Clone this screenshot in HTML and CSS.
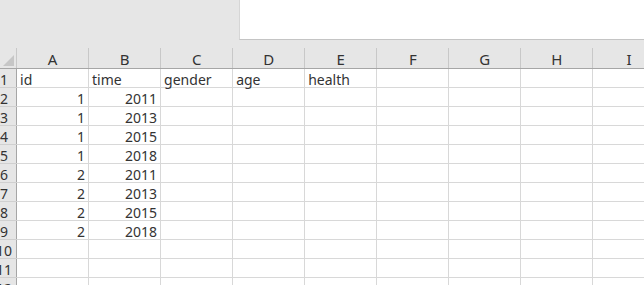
FILE: index.html
```html
<!DOCTYPE html>
<html lang="en">
<head>
    <meta charset="UTF-8">
    <title>Sheet</title>
    <link rel="stylesheet" href="styles.css">
</head>
<body>
    <div class="top">
        <div class="formula-box"></div>
    </div>
    <div class="sheet">
        <table class="grid">
            <tr class="head">
                <th class="corner"><div class="corner-inner"><span class="tri"></span></div></th>
                <th>A</th><th>B</th><th>C</th><th>D</th><th>E</th><th>F</th><th>G</th><th>H</th><th>I</th>
            </tr>
            <tr><th class="num">1</th><td>id</td><td>time</td><td>gender</td><td>age</td><td>health</td><td></td><td></td><td></td><td></td></tr>
            <tr><th class="num">2</th><td class="n">1</td><td class="n">2011</td><td></td><td></td><td></td><td></td><td></td><td></td><td></td></tr>
            <tr><th class="num">3</th><td class="n">1</td><td class="n">2013</td><td></td><td></td><td></td><td></td><td></td><td></td><td></td></tr>
            <tr><th class="num">4</th><td class="n">1</td><td class="n">2015</td><td></td><td></td><td></td><td></td><td></td><td></td><td></td></tr>
            <tr><th class="num">5</th><td class="n">1</td><td class="n">2018</td><td></td><td></td><td></td><td></td><td></td><td></td><td></td></tr>
            <tr><th class="num">6</th><td class="n">2</td><td class="n">2011</td><td></td><td></td><td></td><td></td><td></td><td></td><td></td></tr>
            <tr><th class="num">7</th><td class="n">2</td><td class="n">2013</td><td></td><td></td><td></td><td></td><td></td><td></td><td></td></tr>
            <tr><th class="num">8</th><td class="n">2</td><td class="n">2015</td><td></td><td></td><td></td><td></td><td></td><td></td><td></td></tr>
            <tr><th class="num">9</th><td class="n">2</td><td class="n">2018</td><td></td><td></td><td></td><td></td><td></td><td></td><td></td></tr>
            <tr><th class="num">10</th><td></td><td></td><td></td><td></td><td></td><td></td><td></td><td></td><td></td></tr>
            <tr><th class="num">11</th><td></td><td></td><td></td><td></td><td></td><td></td><td></td><td></td><td></td></tr>
            <tr><th class="num">12</th><td></td><td></td><td></td><td></td><td></td><td></td><td></td><td></td><td></td></tr>
        </table>
    </div>
</body>
</html>
```

FILE: styles.css
```css
body {
    margin: 0;
    background-color: #e6e6e6;
    font-family: "Noto Sans", "Noto Sans CJK SC", sans-serif;
    color: #333;
    overflow: hidden;
    height: 285px;
}
.top {
    height: 40px;
    display: flex;
    justify-content: flex-end;
}
.formula-box {
    width: 404px;
    height: 39px;
    background-color: #fff;
    border-left: 1px solid #d6d6d6;
    border-bottom: 1px solid #c4c4c4;
}
.sheet {
    margin-top: 8px;
    margin-left: -12px;
}
.grid {
    border-collapse: collapse;
    table-layout: fixed;
    width: 677px;
    font-size: 14px;
}
.grid th,
.grid td {
    padding: 0;
    white-space: nowrap;
}
.head th {
    height: 20px;
    width: 71px;
    line-height: 18px;
    background-color: #e6e6e6;
    font-weight: normal;
    font-size: 15px;
    color: #333;
    border-left: 1px solid #c8c8c8;
    border-bottom: 1px solid #a6a6a6;
    text-align: center;
    vertical-align: bottom;
}
.head th.corner {
    width: 28px;
    border-left: none;
    border-right: 1px solid #c8c8c8;
}
.corner-inner {
    display: flex;
    justify-content: flex-end;
    align-items: flex-end;
    height: 20px;
    padding-right: 2px;
    padding-bottom: 2px;
    box-sizing: border-box;
}
.tri {
    width: 0;
    height: 0;
    border-left: 11px solid transparent;
    border-bottom: 11px solid #c6c6c6;
}
.grid td {
    height: 15px;
    line-height: 15px;
    padding-top: 3px;
    background-color: #fff;
    border: 1px solid #d8d8d8;
    padding-left: 3px;
}
.grid td.n {
    text-align: right;
    padding-left: 0;
    padding-right: 3px;
}
th.num {
    height: 15px;
    line-height: 15px;
    padding-top: 3px !important;
    padding-left: 4px !important;
    background-color: #e6e6e6;
    font-weight: normal;
    font-size: 14px;
    color: #333;
    text-align: center;
    border-right: 1px solid #a6a6a6;
    border-bottom: 1px solid #d0d0d0;
}
```
